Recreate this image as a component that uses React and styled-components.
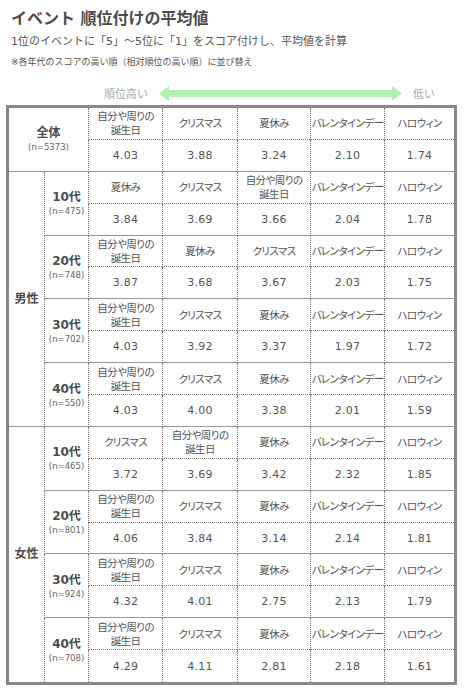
import styled, { createGlobalStyle } from 'styled-components';

const GlobalStyle = createGlobalStyle`
  body {
    margin: 0;
    background: #fff;
    font-family: "DejaVu Sans", "Noto Sans CJK JP", sans-serif;
    color: #555;
  }
`;

const BIRTHDAY = ['自分や周りの', '誕生日'];
const XMAS = 'クリスマス';
const SUMMER = '夏休み';
const VALENTINE = 'バレンタインデー';
const HALLOWEEN = 'ハロウィン';

const STANDARD = [BIRTHDAY, XMAS, SUMMER, VALENTINE, HALLOWEEN];

const overall = {
  n: 5373,
  events: STANDARD,
  scores: ['4.03', '3.88', '3.24', '2.10', '1.74'],
};

const sections = [
  {
    gender: '男性',
    ages: [
      { age: '10代', n: 475, events: [SUMMER, XMAS, BIRTHDAY, VALENTINE, HALLOWEEN], scores: ['3.84', '3.69', '3.66', '2.04', '1.78'] },
      { age: '20代', n: 748, events: [BIRTHDAY, SUMMER, XMAS, VALENTINE, HALLOWEEN], scores: ['3.87', '3.68', '3.67', '2.03', '1.75'] },
      { age: '30代', n: 702, events: STANDARD, scores: ['4.03', '3.92', '3.37', '1.97', '1.72'] },
      { age: '40代', n: 550, events: STANDARD, scores: ['4.03', '4.00', '3.38', '2.01', '1.59'] },
    ],
  },
  {
    gender: '女性',
    ages: [
      { age: '10代', n: 465, events: [XMAS, BIRTHDAY, SUMMER, VALENTINE, HALLOWEEN], scores: ['3.72', '3.69', '3.42', '2.32', '1.85'] },
      { age: '20代', n: 801, events: STANDARD, scores: ['4.06', '3.84', '3.14', '2.14', '1.81'] },
      { age: '30代', n: 924, events: STANDARD, scores: ['4.32', '4.01', '2.75', '2.13', '1.79'] },
      { age: '40代', n: 708, events: STANDARD, scores: ['4.29', '4.11', '2.81', '2.18', '1.61'] },
    ],
  },
];

export default function App() {
  return (
    <Page>
      <GlobalStyle />
      <Title>イベント 順位付けの平均値</Title>
      <Subtitle>1位のイベントに「5」～5位に「1」をスコア付けし、平均値を計算</Subtitle>
      <Note>※各年代のスコアの高い順（相対順位の高い順）に並び替え</Note>
      <Legend>
        <LegendText>順位高い</LegendText>
        <svg width="243" height="15" viewBox="0 0 243 15">
          <polygon
            points="0,7.5 10,0 10,4 233,4 233,0 243,7.5 233,15 233,11 10,11 10,15"
            fill="#b3efb3"
          />
        </svg>
        <LegendText>低い</LegendText>
      </Legend>
      <Table>
        <colgroup>
          <col style={{ width: 35 }} />
          <col style={{ width: 44 }} />
          <col style={{ width: 74 }} />
          <col style={{ width: 75 }} />
          <col style={{ width: 73 }} />
          <col style={{ width: 74 }} />
          <col />
        </colgroup>
        <tbody>
          <Row>
            <LabelCell colSpan={2} rowSpan={2}>
              <Label>全体</Label>
              <Count>(n={overall.n})</Count>
            </LabelCell>
            {overall.events.map((event, i) => (
              <EventCell key={i}>{renderEvent(event)}</EventCell>
            ))}
          </Row>
          <Row>
            {overall.scores.map((score, i) => (
              <ScoreCell key={i}>{score}</ScoreCell>
            ))}
          </Row>
          {sections.map((section, si) =>
            section.ages.map((group, gi) => {
              const last = si === sections.length - 1 && gi === section.ages.length - 1;
              return [
                <Row key={`${si}-${gi}-a`}>
                  {gi === 0 && (
                    <GenderCell rowSpan={section.ages.length * 2} $last={si === sections.length - 1}>
                      <Label>{section.gender}</Label>
                    </GenderCell>
                  )}
                  <AgeCell rowSpan={2} $last={last}>
                    <Label>{group.age}</Label>
                    <Count>(n={group.n})</Count>
                  </AgeCell>
                  {group.events.map((event, i) => (
                    <EventCell key={i}>{renderEvent(event)}</EventCell>
                  ))}
                </Row>,
                <Row key={`${si}-${gi}-b`}>
                  {group.scores.map((score, i) => (
                    <ScoreCell key={i} $last={last}>{score}</ScoreCell>
                  ))}
                </Row>,
              ];
            })
          )}
        </tbody>
      </Table>
    </Page>
  );

  function renderEvent(event) {
    if (Array.isArray(event)) {
      return (
        <>
          {event[0]}
          <br />
          {event[1]}
        </>
      );
    }
    return event;
  }
}

const Page = styled.div`
  width: 465px;
  padding: 8px 0 0 6px;
  box-sizing: border-box;
`;

const Title = styled.h1`
  margin: 0 0 2px 5px;
  font-size: 16px;
  line-height: 22px;
  font-weight: bold;
  color: #4d4d4d;
`;

const Subtitle = styled.p`
  margin: 0 0 2px 5px;
  font-size: 11px;
  line-height: 20px;
  color: #555;
`;

const Note = styled.p`
  margin: 0 0 0 5px;
  font-size: 9px;
  line-height: 16px;
  color: #555;
`;

const Legend = styled.div`
  display: flex;
  align-items: center;
  gap: 11px;
  margin: 15px 0 4px 98px;
  height: 16px;
`;

const LegendText = styled.span`
  font-size: 11px;
  color: #aaa;
`;

const Table = styled.table`
  width: 451px;
  border: 3px solid #888;
  border-spacing: 0;
  table-layout: fixed;
  box-sizing: border-box;
`;

const Row = styled.tr`
  height: 31.9px;
`;

const Cell = styled.td`
  padding: 0;
  text-align: center;
  vertical-align: middle;
  color: #555;
`;

const EventCell = styled(Cell)`
  border-left: 1px dotted #777;
  border-bottom: 1px dotted #777;
  font-size: 10.5px;
  line-height: 14px;
  white-space: nowrap;
  letter-spacing: -0.6px;
  font-feature-settings: "palt";
`;

const ScoreCell = styled(Cell)`
  border-left: 1px dotted #777;
  border-bottom: ${p => (p.$last ? 'none' : '1px solid #999')};
  font-size: 11px;
  letter-spacing: 0.3px;
`;

const LabelCell = styled(Cell)`
  border-bottom: 1px solid #999;
`;

const GenderCell = styled(Cell)`
  border-bottom: ${p => (p.$last ? 'none' : '1px solid #999')};
`;

const AgeCell = styled(Cell)`
  border-left: 1px dotted #777;
  border-bottom: ${p => (p.$last ? 'none' : '1px solid #999')};
`;

const Label = styled.div`
  font-size: 12px;
  font-weight: bold;
  line-height: 16px;
  color: #4d4d4d;
`;

const Count = styled.div`
  font-size: 8.5px;
  line-height: 12px;
  color: #666;
`;
